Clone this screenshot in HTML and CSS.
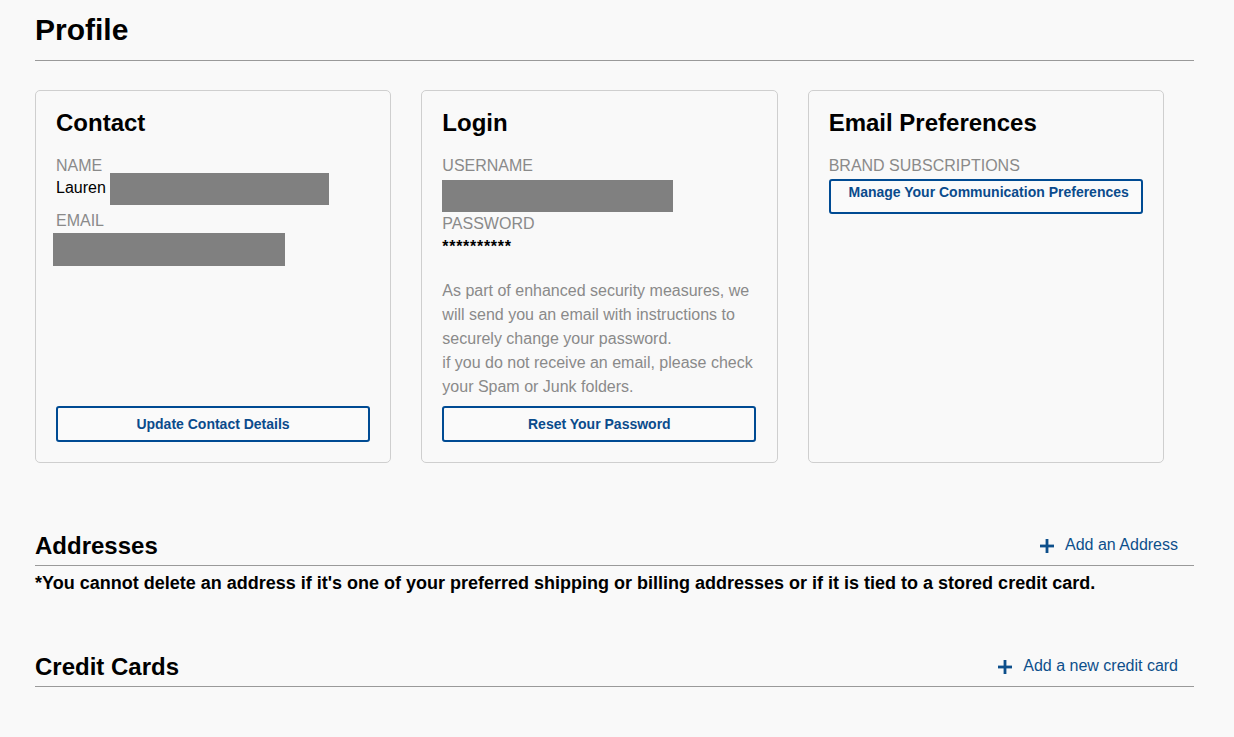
FILE: index.html
```html
<!DOCTYPE html>
<html lang="en">
<head>
<meta charset="utf-8">
<title>Profile</title>
<link rel="stylesheet" href="styles.css">
</head>
<body>
<main class="page">
  <h1 class="page-title">Profile</h1>

  <div class="cards">
    <section class="card">
      <h2 class="card-title">Contact</h2>
      <div class="label label-first">NAME</div>
      <div class="value-row">
        <span class="value-text">Lauren</span>
        <span class="redact redact-name"></span>
      </div>
      <div class="label label-email">EMAIL</div>
      <span class="redact redact-email"></span>
      <button class="btn btn-bottom">Update Contact Details</button>
    </section>

    <section class="card">
      <h2 class="card-title">Login</h2>
      <div class="label label-first">USERNAME</div>
      <span class="redact redact-user"></span>
      <div class="label label-pass">PASSWORD</div>
      <div class="stars">**********</div>
      <p class="note-text">As part of enhanced security measures, we will send you an email with instructions to securely change your password.<br>if you do not receive an email, please check your Spam or Junk folders.</p>
      <button class="btn btn-bottom">Reset Your Password</button>
    </section>

    <section class="card">
      <h2 class="card-title">Email Preferences</h2>
      <div class="label label-first">BRAND SUBSCRIPTIONS</div>
      <button class="btn btn-prefs">Manage Your Communication Preferences</button>
    </section>
  </div>

  <section class="section section-addresses">
    <div class="section-head">
      <h2 class="section-title">Addresses</h2>
      <a class="add-link" href="#">
        <svg class="plus" width="14" height="14" viewBox="0 0 14 14" aria-hidden="true"><rect x="5.6" y="0" width="2.8" height="14"/><rect x="0" y="5.6" width="14" height="2.8"/></svg>
        <span>Add an Address</span>
      </a>
    </div>
    <p class="section-note">*You cannot delete an address if it's one of your preferred shipping or billing addresses or if it is tied to a stored credit card.</p>
  </section>

  <section class="section section-cards">
    <div class="section-head">
      <h2 class="section-title">Credit Cards</h2>
      <a class="add-link" href="#">
        <svg class="plus" width="14" height="14" viewBox="0 0 14 14" aria-hidden="true"><rect x="5.6" y="0" width="2.8" height="14"/><rect x="0" y="5.6" width="14" height="2.8"/></svg>
        <span>Add a new credit card</span>
      </a>
    </div>
  </section>
</main>
</body>
</html>
```

FILE: styles.css
```css
html, body {
  margin: 0;
  padding: 0;
  background: #f9f9f9;
}

body {
  font-family: "Liberation Sans", Arial, sans-serif;
  color: #000;
}

.page {
  padding: 13px 40px 0 35px;
}

.page-title {
  margin: 0;
  font-size: 30px;
  font-weight: bold;
  line-height: 34px;
  padding-bottom: 13px;
  border-bottom: 1px solid #9a9a9a;
}

.cards {
  display: grid;
  grid-template-columns: repeat(3, 356.33px);
  column-gap: 30px;
  margin-top: 29px;
}

.card {
  display: flex;
  flex-direction: column;
  align-items: flex-start;
  border: 1px solid #cfcfcf;
  border-radius: 5px;
  padding: 18px 20px 20px 20px;
  min-height: 333px;
  background: #f9f9f9;
}

.card-title {
  margin: 0;
  font-size: 24px;
  font-weight: bold;
  line-height: 28px;
}

.label {
  font-size: 16px;
  line-height: 18px;
  color: #8a8a8a;
}

.label-first {
  margin-top: 20px;
}

.value-row {
  display: flex;
  align-items: flex-start;
  gap: 4px;
  margin-top: -2px;
}

.value-text {
  font-size: 16px;
  line-height: 18px;
  margin-top: 6px;
}

.redact {
  display: block;
  background: #808080;
}

.redact-name {
  width: 219px;
  height: 32px;
}

.label-email {
  margin-top: 7px;
}

.redact-email {
  width: 232px;
  height: 33px;
  margin-top: 3px;
  margin-left: -3px;
}

.redact-user {
  width: 231px;
  height: 32px;
  margin-top: 5px;
}

.label-pass {
  margin-top: 3px;
}

.stars {
  margin-top: 5px;
  font-size: 16px;
  line-height: 18px;
  font-weight: bold;
  letter-spacing: 0.7px;
}

.note-text {
  margin: 23px 0 0 0;
  font-size: 16px;
  line-height: 24px;
  color: #8a8a8a;
}

.btn {
  box-sizing: border-box;
  width: 314px;
  height: 36px;
  border: 2px solid #004b93;
  border-radius: 3px;
  background: #fafafa;
  color: #0a4b8c;
  font-family: "Liberation Sans", Arial, sans-serif;
  font-size: 14px;
  font-weight: bold;
  line-height: 16px;
  padding: 0;
  text-align: center;
  cursor: pointer;
}

.btn-bottom {
  margin-top: auto;
}

.btn-prefs {
  margin-top: 4px;
  height: 35px;
  padding: 3px 0 0 6px;
  display: flex;
  align-items: flex-start;
  justify-content: center;
}

.section-addresses {
  margin-top: 69px;
}

.section-cards {
  margin-top: 59px;
}

.section-head {
  display: flex;
  justify-content: space-between;
  align-items: flex-end;
  border-bottom: 1px solid #9a9a9a;
  padding: 0 16px 5px 0;
}

.section-title {
  margin: 0;
  font-size: 24px;
  font-weight: bold;
  line-height: 28px;
}

.add-link {
  display: flex;
  align-items: flex-start;
  gap: 11px;
  color: #0d4f8b;
  text-decoration: none;
  font-size: 16px;
  line-height: 18px;
  margin-bottom: 6px;
}

.plus {
  fill: #0d4f8b;
  display: block;
  margin-top: 3px;
}

.section-note {
  margin: 7px 0 0 0;
  font-size: 18px;
  font-weight: bold;
  line-height: 21px;
}
```
